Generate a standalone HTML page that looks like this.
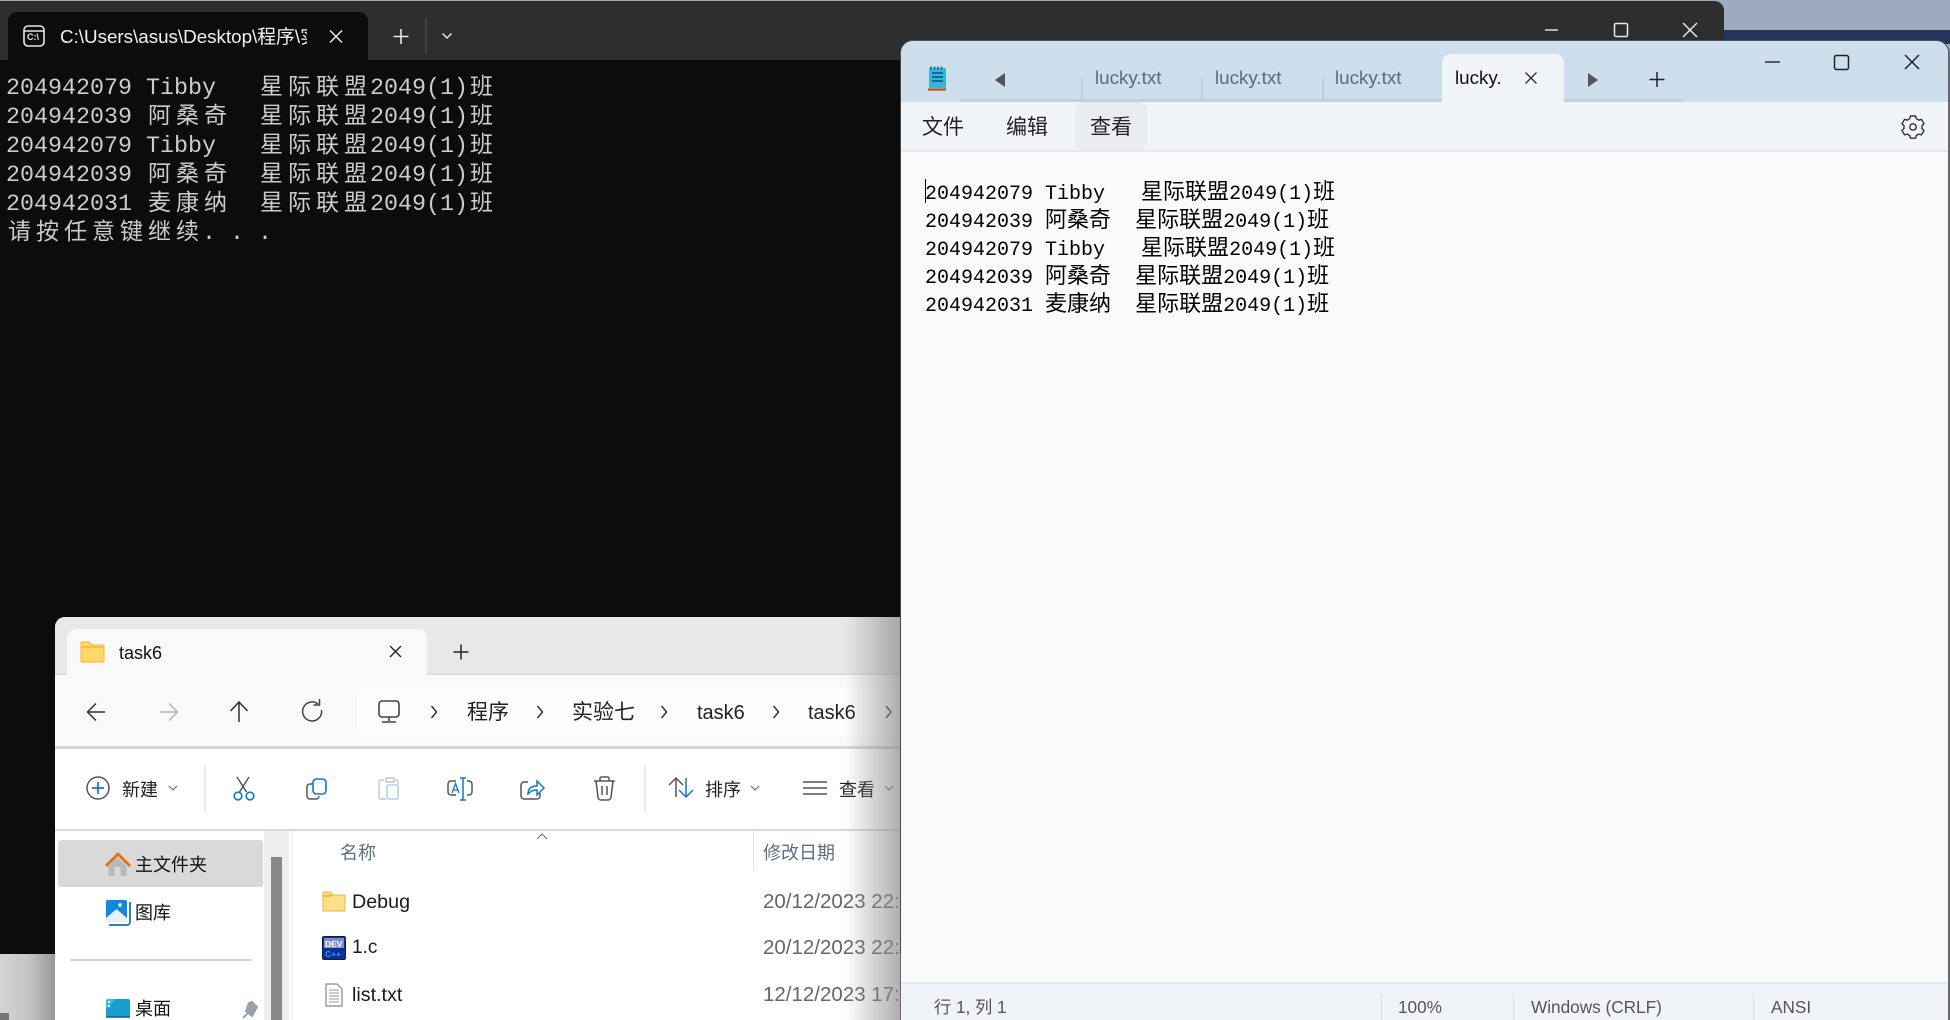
<!DOCTYPE html>
<html lang="zh">
<head>
<meta charset="utf-8">
<title>Reference recreation</title>
<style>
html,body{margin:0;padding:0;width:1950px;height:1020px;overflow:hidden;background:#9eaabf}
*{box-sizing:border-box}
body{position:relative;font-family:"Liberation Sans","Noto Sans CJK SC",sans-serif}
.a{position:absolute}
.t{position:absolute;white-space:pre;line-height:30px;height:30px}
svg{position:absolute;overflow:visible;left:0;top:0}
.con{position:absolute;left:6px;white-space:pre;font:23.33px/29px "Liberation Mono","Noto Sans CJK SC",monospace;color:#cccccc;height:29px}
.con i{font-style:normal;font-family:"Noto Sans CJK SC",sans-serif;font-size:23px;letter-spacing:5px;margin-left:2px;margin-right:-2px}
.np{position:absolute;left:925px;white-space:pre;font:20px/28px "Liberation Mono","Noto Sans CJK SC",monospace;color:#000;height:28px}
.np i{font-style:normal;font-family:"Noto Sans CJK SC",sans-serif;font-size:22px}
</style>
</head>
<body>
<!-- desktop bg -->
<div class="a" style="left:1724px;top:30px;width:226px;height:14px;background:#24375c"></div>
<div class="a" style="left:0;top:950px;width:60px;height:70px;background:linear-gradient(90deg,#d4d4d4,#c4c4c4 50%,#8e8e8e)"></div>
<div class="a" style="left:0;top:1013px;width:9px;height:7px;background:#777"></div>
<div class="a" style="left:1948px;top:75px;width:2px;height:945px;background:#a9acb2"></div>

<!-- terminal -->
<div class="a" style="left:0;top:1px;width:1724px;height:953px;background:#0c0c0c;border-radius:0 10px 0 0;overflow:hidden">
  <div class="a" style="left:0;top:0;width:1724px;height:59px;background:#2e2e2e"></div>
  <div class="a" style="left:8px;top:11px;width:360px;height:49px;background:#0c0c0c;border-radius:9px 9px 0 0"></div>
</div>
<svg width="1950" height="1020" fill="none" stroke="#e8e8e8">
  <rect x="24" y="26" width="20" height="20" rx="4" stroke-width="1.6"/>
  <path d="M24 31h20" stroke-width="1.6"/>
  <path d="M401 29v15M393.500 36.500h15" stroke-width="1.6"/>
  <path d="M426 18v35" stroke="#4a4a4a" stroke-width="1.400"/>
  <path d="M442.500 33.500l4.500 4.500 4.500-4.500" stroke-width="1.400"/>
  <path d="M330 30.500l12 12M342 30.500l-12 12" stroke-width="1.500"/>
  <path d="M1545 30h13" stroke-width="1.400"/>
  <rect x="1614.500" y="23.500" width="13" height="13" rx="1.500" stroke-width="1.500"/>
  <path d="M1683 23l14 14M1697 23l-14 14" stroke-width="1.500"/>
</svg>
<div class="t" style="left:27px;top:30px;height:14px;line-height:14px;font-size:9px;font-weight:700;color:#e8e8e8">C:\</div>
<div class="t" style="left:60px;top:22px;width:247px;overflow:hidden;font-size:18.800px;color:#f2f2f2">C:\Users\asus\Desktop\程序\实验七\task6</div>

<div class="con" style="top:70px">204942079 Tibby   <i>星际联盟</i>2049(1)<i>班</i></div>
<div class="con" style="top:99px">204942039 <i>阿桑奇</i>  <i>星际联盟</i>2049(1)<i>班</i></div>
<div class="con" style="top:128px">204942079 Tibby   <i>星际联盟</i>2049(1)<i>班</i></div>
<div class="con" style="top:157px">204942039 <i>阿桑奇</i>  <i>星际联盟</i>2049(1)<i>班</i></div>
<div class="con" style="top:186px">204942031 <i>麦康纳</i>  <i>星际联盟</i>2049(1)<i>班</i></div>
<div class="con" style="top:215px"><i>请按任意键继续</i>. . .</div>

<!-- explorer -->
<div class="a" style="left:55px;top:617px;width:845px;height:403px;background:#fff;border-radius:10px 0 0 0;overflow:hidden">
  <div class="a" style="left:0;top:0;width:845px;height:58px;background:#e8e8e8"></div>
  <div class="a" style="left:0;top:56px;width:845px;height:2px;background:#dcdcdc"></div>
  <div class="a" style="left:12px;top:12px;width:360px;height:47px;background:#f9f9f9;border-radius:9px 9px 0 0"></div>
  <div class="a" style="left:0;top:58px;width:845px;height:71px;background:#f9f9f9"></div>
  <div class="a" style="left:302px;top:71px;width:560px;height:48px;background:#fdfdfd;border-radius:8px"></div>
  <div class="a" style="left:0;top:129px;width:845px;height:3px;background:#d6d6d6"></div>
  <div class="a" style="left:0;top:212px;width:845px;height:2px;background:#d8d8d8"></div>
  <div class="a" style="left:149px;top:148px;width:2px;height:47px;background:#ebebeb"></div>
  <div class="a" style="left:589px;top:148px;width:2px;height:47px;background:#ebebeb"></div>
  <div class="a" style="left:3px;top:223px;width:205px;height:47px;background:#d9d9d9;border-radius:3px"></div>
  <div class="a" style="left:209px;top:214px;width:25px;height:190px;background:#eeeeee"></div>
  <div class="a" style="left:216px;top:240px;width:11px;height:170px;background:#888"></div>
  <div class="a" style="left:236px;top:214px;width:2px;height:190px;background:#f2f2f2"></div>
  <div class="a" style="left:15px;top:342px;width:182px;height:2px;background:#d5d5d5"></div>
  <div class="a" style="left:698px;top:214px;width:1px;height:40px;background:#e3e3e3"></div>
</div>

<div class="t" style="left:119px;top:638px;font-size:18px;font-weight:400;color:#111">task6</div>
<div class="t" style="left:467px;top:698px;font-size:21px;color:#222">程序</div>
<div class="t" style="left:572px;top:698px;font-size:21px;color:#222">实验七</div>
<div class="t" style="left:697px;top:698px;font-size:20px;color:#222">task6</div>
<div class="t" style="left:808px;top:698px;font-size:20px;color:#222">task6</div>
<div class="t" style="left:122px;top:775px;font-size:18px;color:#222">新建</div>
<div class="t" style="left:705px;top:775px;font-size:18px;color:#222">排序</div>
<div class="t" style="left:839px;top:775px;font-size:18px;color:#222">查看</div>
<div class="t" style="left:135px;top:850px;font-size:18px;color:#111">主文件夹</div>
<div class="t" style="left:135px;top:898px;font-size:18px;color:#111">图库</div>
<div class="t" style="left:135px;top:994px;font-size:18px;color:#111">桌面</div>
<div class="t" style="left:340px;top:838px;font-size:18px;color:#5c6f84">名称</div>
<div class="t" style="left:763px;top:838px;font-size:18px;color:#5c6f84">修改日期</div>
<div class="t" style="left:352px;top:887px;font-size:19.700px;color:#1a1a1a">Debug</div>
<div class="t" style="left:352px;top:933px;font-size:19px;color:#1a1a1a">1.c</div>
<div class="t" style="left:352px;top:980px;font-size:19.700px;color:#1a1a1a">list.txt</div>
<div class="t" style="left:763px;top:887px;width:137px;overflow:hidden;font-size:20.500px;color:#666">20/12/2023 22:51</div>
<div class="t" style="left:763px;top:933px;width:137px;overflow:hidden;font-size:20.500px;color:#666">20/12/2023 22:51</div>
<div class="t" style="left:763px;top:980px;width:137px;overflow:hidden;font-size:20.500px;color:#666">12/12/2023 17:02</div>

<svg width="1950" height="1020" fill="none">
  <!-- tab folder -->
  <path d="M81 643a1 1 0 0 1 1-1h7l3 3h11a1 1 0 0 1 1 1v15a1 1 0 0 1-1 1H82a1 1 0 0 1-1-1z" fill="#ffd868" stroke="#eab53c"/>
  <path d="M81 647h23" stroke="#f5bf3f" stroke-width="2"/>
  <path d="M390 646l11 11M401 646l-11 11" stroke="#222" stroke-width="1.400"/>
  <path d="M461 644.500v15M453.500 652h15" stroke="#222" stroke-width="1.500"/>
  <!-- nav -->
  <path d="M105 712H88M96 703.500L87.500 712l8.500 8.500" stroke="#333" stroke-width="1.500"/>
  <path d="M160 712h17M169 703.500l8.500 8.500-8.500 8.500" stroke="#b5b5b5" stroke-width="1.500"/>
  <path d="M239 722v-20M230.500 711l8.500-9 8.500 9" stroke="#333" stroke-width="1.500"/>
  <path d="M318 704a9.500 9.500 0 1 0 3.500 6M319.500 699v6h-6" stroke="#444" stroke-width="1.500"/>
  <!-- address -->
  <rect x="379" y="701" width="20" height="16" rx="3" stroke="#444" stroke-width="1.600"/>
  <path d="M389 717v4M382 722h14" stroke="#444" stroke-width="1.600"/>
  <path d="M431.500 706l5 6-5 6M537.500 706l5 6-5 6M661.500 706l5 6-5 6M773.500 706l5 6-5 6M886 706l5 6-5 6" stroke="#333" stroke-width="1.500"/>
  <!-- toolbar -->
  <circle cx="98" cy="788" r="11" stroke="#555" stroke-width="1.500"/>
  <path d="M98 782v12M92 788h12" stroke="#0a78d6" stroke-width="1.700"/>
  <path d="M169 786l4 4 4-4" stroke="#666" stroke-width="1"/>
  <path d="M237 777l9.500 15M249 777l-9.500 15" stroke="#555" stroke-width="1.500"/>
  <circle cx="238" cy="796" r="3.800" stroke="#0a78d6" stroke-width="1.600"/>
  <circle cx="250" cy="796" r="3.800" stroke="#0a78d6" stroke-width="1.600"/>
  <path d="M313 784h-3a3 3 0 0 0-3 3v9a3 3 0 0 0 3 3h6a3 3 0 0 0 3-3" stroke="#555" stroke-width="1.500"/>
  <rect x="313" y="779" width="13" height="15" rx="3.500" stroke="#0a78d6" stroke-width="1.600"/>
  <path d="M384 780h-3a2 2 0 0 0-2 2v15a2 2 0 0 0 2 2h5M387 778h7v4h-8v-4zM395 780h1a2 2 0 0 1 2 2v2" stroke="#c4c4c4" stroke-width="1.400"/>
  <rect x="387" y="785" width="11" height="14" rx="2" stroke="#a8d0f0" stroke-width="1.500"/>
  <path d="M456 781h-5a3 3 0 0 0-3 3v8a3 3 0 0 0 3 3h5M467 781h2a3 3 0 0 1 3 3v8a3 3 0 0 1-3 3h-2" stroke="#555" stroke-width="1.500"/>
  <path d="M460 778h6M460 800h6M463 778v22" stroke="#0a78d6" stroke-width="1.500"/>
  <path d="M452 793l3.500-9.500 3.500 9.500M453.200 790h4.800" stroke="#0a78d6" stroke-width="1.300"/>
  <path d="M528 782h-4a3 3 0 0 0-3 3v11a3 3 0 0 0 3 3h13a3 3 0 0 0 3-3v-3" stroke="#555" stroke-width="1.500"/>
  <path d="M528 794c0-6 4-8 9-8v-5l7 7-7 7v-5c-4 0-6 1-9 4z" stroke="#0a78d6" stroke-width="1.500"/>
  <path d="M594 781h21M600 781v-2.500a1.500 1.500 0 0 1 1.500-1.500h6a1.500 1.500 0 0 1 1.500 1.500v2.500M596 781l2 16a3 3 0 0 0 3 3h7a3 3 0 0 0 3-3l2-16M602 786v9M607 786v9" stroke="#555" stroke-width="1.500"/>
  <path d="M676 797v-19M669 785l7-7 7 7" stroke="#555" stroke-width="1.500"/>
  <path d="M686 778v19M679 790l7 7 7-7" stroke="#0a78d6" stroke-width="1.500"/>
  <path d="M751 786l4 4 4-4" stroke="#666" stroke-width="1"/>
  <path d="M803 782h24M803 788h24M803 794h24" stroke="#555" stroke-width="1.500"/>
  <path d="M885 786l4 4 4-4" stroke="#666" stroke-width="1"/>
  <path d="M537 839l5-5 5 5" stroke="#666" stroke-width="1"/>
  <!-- sidebar icons -->
  <path d="M108.500 866v9a1 1 0 0 0 1 1h5v-9h6v9h5a1 1 0 0 0 1-1v-9l-9-9z" fill="#b9b9b9"/>
  <path d="M106 866l12-12 12 12" stroke="#e96f0d" stroke-width="2.800"/>
  <path d="M109 925h18a3 3 0 0 0 3-3v-20" stroke="#2f7fce" stroke-width="2"/>
  <rect x="106" y="900" width="21" height="22" rx="2" fill="#1288dc"/>
  <path d="M106 918l10.500-9 10.500 9v4h-21z" fill="#e7f2fc"/>
  <circle cx="120" cy="905" r="1.700" fill="#fff"/>
  <rect x="106" y="999" width="24" height="18" rx="2" fill="#1a9ed0"/>
  <path d="M106 1001a2 2 0 0 1 2-2h8l-10 10z" fill="#3ed2e8" opacity=".7"/>
  <rect x="108" y="1001" width="2" height="2" fill="#fff"/>
  <rect x="108" y="1005" width="2" height="2" fill="#fff"/>
  <path d="M106 1017h24" stroke="#0b5c8c" stroke-width="1.500"/>
  <path d="M243 1018l6-6M249 1003l-3 8 6 5 5-9-5-5z" stroke="#99a2aa" fill="#99a2aa" stroke-width="2"/>
  <!-- list icons -->
  <path d="M323 893a1 1 0 0 1 1-1h6l3 3h11a1 1 0 0 1 1 1v14a1 1 0 0 1-1 1h-20a1 1 0 0 1-1-1z" fill="#ffe08a" stroke="#eab53c"/>
  <path d="M323 896h7l2-1" stroke="#f5bb33" stroke-width="2"/>
  <rect x="322.500" y="936.500" width="23" height="23" rx="1.500" fill="#16337e" stroke="#0c1b40"/>
  <rect x="324" y="938" width="20" height="10" fill="#7c90cf"/>
  <path d="M324 948h20v10h-20z" fill="#0d2d9c"/>
  <text x="325" y="947" font-family="Liberation Sans" font-size="8.500" font-weight="700" fill="#fff">DEV</text>
  <text x="325" y="957" font-family="Liberation Sans" font-size="8.500" font-weight="700" fill="#15a4f0">C++</text>
  <path d="M326 984h11l5 5v17h-16z" fill="#fff" stroke="#888" stroke-width="1.200"/>
  <path d="M329 990h10M329 993h10M329 996h10M329 999h10M329 1002h10" stroke="#999" stroke-width="1.100"/>
</svg>
<div class="a" style="left:845px;top:617px;width:55px;height:403px;background:linear-gradient(90deg,rgba(150,150,150,0),rgba(140,140,140,.7))"></div>

<!-- notepad -->
<div class="a" style="left:900px;top:40px;width:1050px;height:980px;background:#55585c;border-radius:13px 14px 0 0;opacity:.8"></div>
<div class="a" style="left:901px;top:41px;width:1047px;height:979px;background:#fafafa;border-radius:12px 12px 0 0;overflow:hidden">
  <div class="a" style="left:0;top:0;width:1047px;height:61px;background:#cddeec"></div>
  <div class="a" style="left:60px;top:58px;width:721px;height:3px;background:#bfd0df"></div>
  <div class="a" style="left:541px;top:13px;width:122px;height:48px;background:#f1f5f9;border-radius:9px 9px 0 0"></div>
  <div class="a" style="left:0;top:61px;width:1047px;height:48px;background:#f1f5f9"></div>
  <div class="a" style="left:174px;top:61px;width:72px;height:48px;background:#e9ecf0;border-radius:8px"></div>
  <div class="a" style="left:0;top:109px;width:1047px;height:2px;background:#e5e8ea"></div>
  <div class="a" style="left:180px;top:37px;width:2px;height:22px;background:#bccddb"></div>
  <div class="a" style="left:300px;top:37px;width:2px;height:22px;background:#bccddb"></div>
  <div class="a" style="left:421px;top:37px;width:2px;height:22px;background:#bccddb"></div>
  <div class="a" style="left:0;top:941px;width:1047px;height:2px;background:#e4e7eb"></div>
  <div class="a" style="left:0;top:943px;width:1047px;height:40px;background:#f0f3f8"></div>
  <div class="a" style="left:480px;top:953px;width:1px;height:27px;background:#d9dce0"></div>
  <div class="a" style="left:612px;top:953px;width:1px;height:27px;background:#d9dce0"></div>
  <div class="a" style="left:852px;top:953px;width:1px;height:27px;background:#d9dce0"></div>
</div>
<svg width="1950" height="1020" fill="none">
  <!-- notepad icon -->
  <rect x="929" y="68" width="17" height="20" rx="1" fill="#32b6dc"/>
  <path d="M931 66.500v3M934.500 66.500v3M938 66.500v3M941.500 66.500v3" stroke="#0b5e86" stroke-width="1.500"/>
  <path d="M932 73h11M932 77h11M932 81h11" stroke="#0b5e86" stroke-width="1.700"/>
  <path d="M928 89.500h18" stroke="#b55a12" stroke-width="2.200"/>
  <path d="M1005 73v14l-10-7z" fill="#555"/>
  <path d="M1588 73v14l10-7z" fill="#555"/>
  <path d="M1657 72v15M1649.500 79.500h15" stroke="#222" stroke-width="1.500"/>
  <path d="M1525.500 72.500l11 11M1536.500 72.500l-11 11" stroke="#333" stroke-width="1.400"/>
  <path d="M1765 62h15" stroke="#222" stroke-width="1.400"/>
  <rect x="1834.500" y="55.500" width="14" height="14" rx="2" stroke="#222" stroke-width="1.500"/>
  <path d="M1905 55l14 14M1919 55l-14 14" stroke="#222" stroke-width="1.500"/>
  <!-- gear -->
  <g stroke="#333" stroke-width="1.400">
    <circle cx="1913" cy="127" r="3.200"/>
    <path d="M1910.500 116.500h5l.8 2.700 2.500 1.400 2.700-.7 2.500 4.300-2 2 0 2.800 2 2-2.500 4.300-2.700-.7-2.500 1.400-.8 2.700h-5l-.8-2.700-2.500-1.400-2.700.7-2.500-4.300 2-2 0-2.800-2-2 2.500-4.300 2.700.7 2.500-1.400z" transform="translate(0 -.5)"/>
  </g>
  <path d="M925.500 179v24" stroke="#000" stroke-width="1"/>
</svg>
<div class="t" style="left:1095px;top:63px;font-size:18.800px;color:#5f6b76">lucky.txt</div>
<div class="t" style="left:1215px;top:63px;font-size:18.800px;color:#5f6b76">lucky.txt</div>
<div class="t" style="left:1335px;top:63px;font-size:18.800px;color:#5f6b76">lucky.txt</div>
<div class="t" style="left:1455px;top:63px;width:47px;overflow:hidden;font-size:18.800px;color:#111">lucky.txt</div>
<div class="t" style="left:922px;top:113px;font-size:21px;color:#222">文件</div>
<div class="t" style="left:1006px;top:113px;font-size:21px;color:#222">编辑</div>
<div class="t" style="left:1090px;top:113px;font-size:21px;color:#222">查看</div>

<div class="np" style="top:176px">204942079 Tibby   <i>星际联盟</i>2049(1)<i>班</i></div>
<div class="np" style="top:204px">204942039 <i>阿桑奇</i>  <i>星际联盟</i>2049(1)<i>班</i></div>
<div class="np" style="top:232px">204942079 Tibby   <i>星际联盟</i>2049(1)<i>班</i></div>
<div class="np" style="top:260px">204942039 <i>阿桑奇</i>  <i>星际联盟</i>2049(1)<i>班</i></div>
<div class="np" style="top:288px">204942031 <i>麦康纳</i>  <i>星际联盟</i>2049(1)<i>班</i></div>

<div class="t" style="left:934px;top:992px;font-size:17.200px;color:#555">行 1, 列 1</div>
<div class="t" style="left:1398px;top:992px;font-size:17.200px;color:#555">100%</div>
<div class="t" style="left:1531px;top:992px;font-size:17.200px;color:#555">Windows (CRLF)</div>
<div class="t" style="left:1771px;top:992px;font-size:17.200px;color:#555">ANSI</div>
</body>
</html>
